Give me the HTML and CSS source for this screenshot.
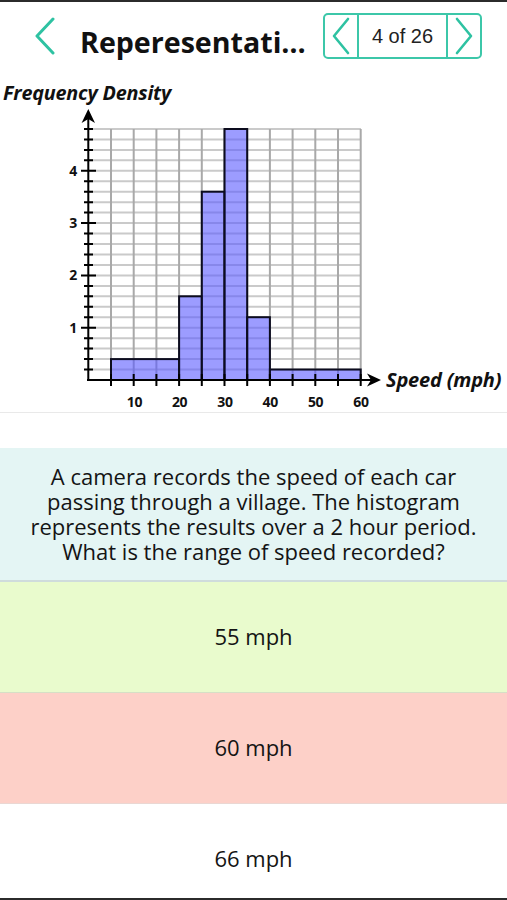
FILE: index.html
```html
<!DOCTYPE html>
<html lang="en">
<head>
<meta charset="utf-8">
<title>Reperesentation</title>
<link rel="stylesheet" href="styles.css">
</head>
<body>
<div class="frame-top"></div>
<header class="header">
  <svg class="back" viewBox="0 0 22 38" width="22" height="38"><polyline points="19,2 3,19 19,36" /></svg>
  <div class="title">Reperesentati…</div>
  <div class="pager">
    <div class="pager-btn pager-prev"><svg viewBox="0 0 20 38" width="20" height="38"><polyline points="17,2 3,19 17,36" /></svg></div>
    <div class="pager-count">4 of 26</div>
    <div class="pager-btn pager-next"><svg viewBox="0 0 20 38" width="20" height="38"><polyline points="3,2 17,19 3,36" /></svg></div>
  </div>
</header>

<section class="chart">
  <div class="y-title">Frequency Density</div>
  <svg class="plot" viewBox="0 103 507 309" width="507" height="309">
    <path class="grid-h" d="M88 369.5H361M88 359.1H361M88 348.6H361M88 338.2H361M88 327.7H361M88 317.2H361M88 306.8H361M88 296.3H361M88 285.9H361M88 275.4H361M88 264.9H361M88 254.5H361M88 244H361M88 233.6H361M88 223.1H361M88 212.6H361M88 202.2H361M88 191.7H361M88 181.3H361M88 170.8H361M88 160.3H361M88 149.9H361M88 139.4H361M88 129H361"/>
    <path class="grid-v" d="M111 129V380M133.7 129V380M156.4 129V380M179.1 129V380M201.8 129V380M224.5 129V380M247.2 129V380M269.9 129V380M292.6 129V380M315.3 129V380M338 129V380M360.7 129V380"/>
    <g class="bars">
      <rect x="111" y="359.1" width="68.1" height="20.9"/>
      <rect x="179.1" y="296.3" width="22.7" height="83.7"/>
      <rect x="201.8" y="191.7" width="22.7" height="188.3"/>
      <rect x="224.5" y="129" width="22.7" height="251"/>
      <rect x="247.2" y="317.2" width="22.7" height="62.8"/>
      <rect x="269.9" y="369.5" width="90.8" height="10.5"/>
    </g>
    <path class="axis" d="M88.3 381V116M87 380H373"/>
    <path class="tick" d="M84 369.5H93M84 359.1H93M84 348.6H93M84 338.2H93M84 317.2H93M84 306.8H93M84 296.3H93M84 285.9H93M84 264.9H93M84 254.5H93M84 244H93M84 233.6H93M84 212.6H93M84 202.2H93M84 191.7H93M84 181.3H93M84 160.3H93M84 149.9H93M84 139.4H93M84 129H93"/>
    <path class="tick" d="M81 327.7H96M81 275.4H96M81 223.1H96M81 170.8H96"/>
    <path class="tick" d="M111 374V386M133.7 374V386M156.4 374V386M179.1 374V386M201.8 374V386M224.5 374V386M247.2 374V386M269.9 374V386M292.6 374V386M315.3 374V386M338 374V386M360.7 374V386"/>
    <path class="arrow" d="M88.3 109L95 123L88.3 119L81.6 123Z"/>
    <path class="arrow" d="M381 380L367 386.5L371 380L367 373.5Z"/>
    <g class="ylab">
      <text x="77" y="332.5">1</text>
      <text x="77" y="280.2">2</text>
      <text x="77" y="227.9">3</text>
      <text x="77" y="175.6">4</text>
    </g>
    <g class="xlab">
      <text x="134.5" y="407">10</text>
      <text x="179.6" y="407">20</text>
      <text x="225" y="407">30</text>
      <text x="270.2" y="407">40</text>
      <text x="315.6" y="407">50</text>
      <text x="360.9" y="407">60</text>
    </g>
    <text class="x-title" x="386" y="386.5">Speed (mph)</text>
  </svg>
</section>

<section class="question">
  <div class="q-line">A camera records the speed of each car</div>
  <div class="q-line">passing through a village. The histogram</div>
  <div class="q-line">represents the results over a 2 hour period.</div>
  <div class="q-line">What is the range of speed recorded?</div>
</section>

<div class="answers">
  <div class="answer answer-correct">55 mph</div>
  <div class="answer answer-wrong">60 mph</div>
  <div class="answer">66 mph</div>
</div>

<div class="frame-bottom"></div>
</body>
</html>
```

FILE: styles.css
```css
html, body {
  margin: 0;
  padding: 0;
  background: #ffffff;
}
body {
  width: 507px;
  height: 900px;
  overflow: hidden;
  font-family: "Open Sans", "Noto Sans", sans-serif;
  color: #141414;
}
.frame-top {
  height: 2px;
  background: #2b2b2b;
}
.frame-bottom {
  position: fixed;
  left: 0;
  right: 0;
  bottom: 0;
  height: 2px;
  background: #2b2b2b;
}

/* header */
.header {
  display: flex;
  align-items: flex-start;
  height: 73px;
  padding-left: 34px;
}
.back {
  flex: none;
  margin-top: 15px;
}
.back polyline,
.pager-btn polyline {
  fill: none;
  stroke: #2ec2a2;
  stroke-width: 3;
  stroke-linecap: round;
  stroke-linejoin: round;
}
.title {
  margin-left: 24px;
  margin-top: 21px;
  font-size: 28.6px;
  font-weight: 700;
  line-height: 38px;
  color: #111;
  white-space: nowrap;
}
.pager {
  flex: none;
  display: flex;
  margin-left: auto;
  margin-right: 25px;
  margin-top: 11px;
  width: 159px;
  height: 46px;
  box-sizing: border-box;
  border: 2px solid #3cc7a9;
  border-radius: 5px;
}
.pager-btn {
  width: 32px;
  display: flex;
  align-items: center;
  justify-content: center;
}
.pager-btn polyline {
  stroke-width: 2.6;
}
.pager-prev {
  border-right: 2px solid #3cc7a9;
}
.pager-next {
  border-left: 2px solid #3cc7a9;
}
.pager-count {
  flex: 1;
  display: flex;
  align-items: center;
  justify-content: center;
  font-family: "Liberation Sans", Arial, sans-serif;
  font-size: 20px;
  color: #222;
}

/* chart */
.chart {
  border-bottom: 1px solid #e9e9e9;
}
.y-title {
  padding: 8px 0 0 3px;
  height: 20px;
  line-height: 20px;
  font-size: 19.8px;
  font-weight: 700;
  font-style: italic;
  letter-spacing: -0.2px;
  color: #111;
}
.plot {
  display: block;
}
.grid-h {
  fill: none;
  stroke: #cacaca;
  stroke-width: 2;
}
.grid-v {
  fill: none;
  stroke: #a9a9a9;
  stroke-width: 2;
}
.bars rect {
  fill: #5a5aff;
  fill-opacity: 0.6;
  stroke: #0c0c1e;
  stroke-width: 2;
}
.axis,
.tick {
  fill: none;
  stroke: #000;
  stroke-width: 2;
}
.arrow {
  fill: #000;
}
.ylab text,
.xlab text {
  font-family: "Open Sans", sans-serif;
  font-size: 14px;
  font-weight: 700;
  letter-spacing: -0.3px;
  fill: #111;
}
.ylab text {
  text-anchor: end;
}
.xlab text {
  text-anchor: middle;
}
.x-title {
  font-family: "Open Sans", sans-serif;
  font-size: 20px;
  font-weight: 700;
  font-style: italic;
  letter-spacing: -0.2px;
  fill: #111;
}

/* question */
.question {
  margin-top: 35px;
  padding: 16px 10px;
  background: #e4f5f4;
  border-bottom: 2px solid #cfdcdc;
  text-align: center;
  font-size: 22px;
  color: #141414;
}
.q-line {
  height: 25px;
  line-height: 25px;
  white-space: nowrap;
}

/* answers */
.answer {
  height: 110px;
  display: flex;
  align-items: center;
  justify-content: center;
  font-size: 22px;
  color: #141414;
  border-bottom: 1px solid #e2e2e2;
  padding-bottom: 2px;
  box-sizing: border-box;
}
.answer-correct {
  height: 111px;
  background: #e9fbcd;
  border-bottom-color: #d6dfc6;
}
.answer-wrong {
  height: 111px;
  background: #fdd0c8;
  border-bottom-color: #ead7d3;
}
```
